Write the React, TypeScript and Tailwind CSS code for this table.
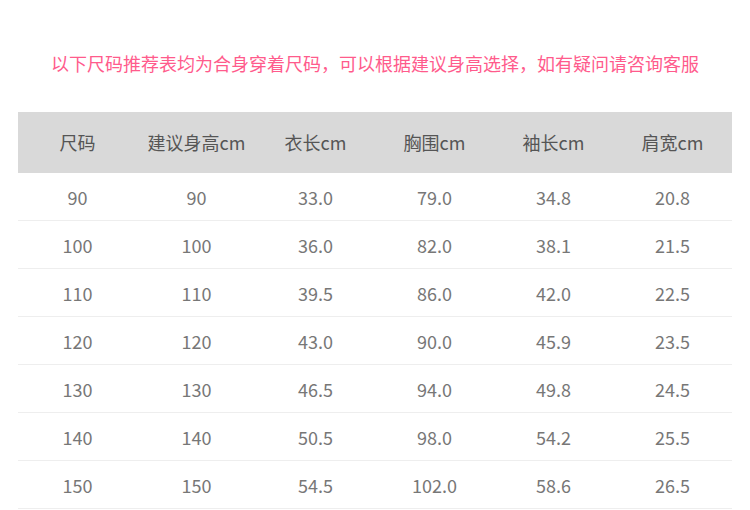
const headers = ["尺码", "建议身高cm", "衣长cm", "胸围cm", "袖长cm", "肩宽cm"];

const rows = [
  ["90", "90", "33.0", "79.0", "34.8", "20.8"],
  ["100", "100", "36.0", "82.0", "38.1", "21.5"],
  ["110", "110", "39.5", "86.0", "42.0", "22.5"],
  ["120", "120", "43.0", "90.0", "45.9", "23.5"],
  ["130", "130", "46.5", "94.0", "49.8", "24.5"],
  ["140", "140", "50.5", "98.0", "54.2", "25.5"],
  ["150", "150", "54.5", "102.0", "58.6", "26.5"],
];

export default function App() {
  return (
    <div
      className="w-[750px] h-[510px] overflow-hidden bg-white"
      style={{ fontFamily: '"Noto Sans CJK SC", "Noto Sans", sans-serif' }}
    >
      {/* notice */}
      <p className="pt-[50px] h-[112px] text-center text-[18px] leading-[26px] text-[#ff5b8c]">
        以下尺码推荐表均为合身穿着尺码，可以根据建议身高选择，如有疑问请咨询客服
      </p>

      {/* size table */}
      <div className="mx-[18px] w-[714px]">
        <div className="grid grid-cols-6 h-[61px] items-center bg-[#d9d9d9] text-[18px] text-[#555]">
          {headers.map((h) => (
            <div key={h} className="text-center">
              {h}
            </div>
          ))}
        </div>
        {rows.map((r) => (
          <div
            key={r[0]}
            className="grid grid-cols-6 h-[48px] pt-[1px] items-center border-b border-[#eeeeee] text-[18px] text-[#777]"
          >
            {r.map((c, i) => (
              <div key={i} className="text-center">
                {c}
              </div>
            ))}
          </div>
        ))}
      </div>
    </div>
  );
}
